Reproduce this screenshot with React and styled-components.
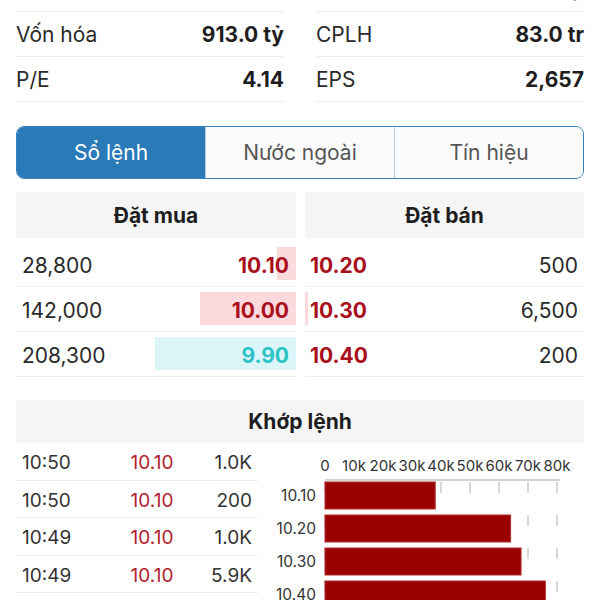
import React from 'react';
import styled, { createGlobalStyle } from 'styled-components';

const GlobalStyle = createGlobalStyle`
  html, body {
    margin: 0;
    padding: 0;
    background: #ffffff;
    overflow: hidden;
  }
  body {
    font-family: Inter, "Noto Sans", "Liberation Sans", sans-serif;
    color: #222;
  }
`;

// first row is scrolled almost out of view, only descenders peek through
const stats = [
  { left: ['Giá trị', '1,234.5'], right: ['GTGD', '2.0 tỷ'], clipped: true },
  { left: ['Vốn hóa', '913.0 tỷ'], right: ['CPLH', '83.0 tr'] },
  { left: ['P/E', '4.14'], right: ['EPS', '2,657'] },
];

const buys = [
  { qty: '28,800', price: '10.10', color: '#a8101b', bar: 19, bg: '#fbd9dc' },
  { qty: '142,000', price: '10.00', color: '#a8101b', bar: 96, bg: '#fbd9dc' },
  { qty: '208,300', price: '9.90', color: '#2cc3c6', bar: 141, bg: '#dcf5f8' },
];

const sells = [
  { qty: '500', price: '10.20', bar: 0 },
  { qty: '6,500', price: '10.30', bar: 3 },
  { qty: '200', price: '10.40', bar: 0 },
];

const trades = [
  ['10:50', '10.10', '1.0K'],
  ['10:50', '10.10', '200'],
  ['10:49', '10.10', '1.0K'],
  ['10:49', '10.10', '5.9K'],
];

const volumes = [
  { price: '10.10', value: 38 },
  { price: '10.20', value: 64 },
  { price: '10.30', value: 67.6 },
  { price: '10.40', value: 76 },
];

const Page = styled.div`
  padding: 0 16px;
  height: 600px;
  overflow: hidden;
`;

const StatsGrid = styled.div`
  display: grid;
  grid-template-columns: 1fr 1fr;
  column-gap: 32px;
  margin-top: -33px;
`;

const StatRow = styled.div`
  display: flex;
  justify-content: space-between;
  align-items: ${p => (p.$clipped ? 'flex-start' : 'center')};
  padding-top: ${p => (p.$clipped ? '9px' : '0')};
  box-sizing: border-box;
  height: 45px;
  border-bottom: 1px solid #ececec;
  font-size: 21px;
`;

const StatLabel = styled.span`
  color: #2a2a2a;
`;

const StatValue = styled.span`
  font-weight: 700;
  color: #1e1e1e;
`;

const Tabs = styled.div`
  display: flex;
  margin-top: 24px;
  height: 51px;
  border: 1.5px solid #3481be;
  border-radius: 8px;
  overflow: hidden;
`;

const Tab = styled.div`
  flex: 1;
  display: flex;
  align-items: center;
  justify-content: center;
  font-size: 21px;
  background: ${p => (p.$active ? '#2b7ab8' : '#fbfbfc')};
  color: ${p => (p.$active ? '#ffffff' : '#555')};
  & + & {
    border-left: 1px solid #bfcedb;
  }
`;

const Book = styled.div`
  display: grid;
  grid-template-columns: 280px 1fr;
  column-gap: 9px;
  margin-top: 13px;
`;

const SideHeader = styled.div`
  height: 46px;
  display: flex;
  align-items: center;
  justify-content: center;
  background: #f5f5f5;
  font-size: 21px;
  font-weight: 700;
  color: #1e1e1e;
  margin-bottom: 4px;
`;

const BookRow = styled.div`
  position: relative;
  display: flex;
  justify-content: space-between;
  align-items: center;
  box-sizing: border-box;
  height: 45px;
  padding-top: 2px;
  border-bottom: 1px solid #ededed;
  padding-left: ${p => (p.$sell ? '5px' : '6px')};
  padding-right: ${p => (p.$sell ? '6px' : '7px')};
  font-size: 21px;
`;

const DepthBar = styled.div`
  position: absolute;
  top: 5px;
  bottom: 6px;
  ${p => (p.$sell ? 'left: 0;' : 'right: 0;')}
  background: ${p => p.$bg};
`;

const Qty = styled.span`
  position: relative;
  color: #2a2a2a;
`;

const Price = styled.span`
  position: relative;
  font-weight: 700;
  color: ${p => p.$color};
`;

const MatchHeader = styled.div`
  margin-top: 23px;
  height: 43px;
  display: flex;
  align-items: center;
  justify-content: center;
  background: #f5f5f5;
  font-size: 21px;
  font-weight: 700;
  color: #1e1e1e;
`;

const MatchBody = styled.div`
  display: grid;
  grid-template-columns: 242px 1fr;
`;

const TradeRow = styled.div`
  display: grid;
  grid-template-columns: 86px 88px 1fr;
  align-items: center;
  box-sizing: border-box;
  height: 37.5px;
  padding: 3px 6px 0;
  border-bottom: 1px solid #ededed;
  font-size: 19px;
  color: #333;
`;

const TradePrice = styled.span`
  color: #b2222e;
  text-align: center;
`;

const TradeVol = styled.span`
  text-align: right;
`;

const Chart = styled.svg`
  display: block;
  font-family: Inter, "Liberation Sans", sans-serif;
`;

function VolumeChart() {
  const x0 = 67;
  const step = 29;
  const ticks = [0, 10, 20, 30, 40, 50, 60, 70, 80];
  return (
    <Chart width="342" height="158">
      {ticks.map((t, i) => (
        <g key={t}>
          <text x={x0 + i * step} y="28" fontSize="15" fill="#333" textAnchor="middle">
            {t === 0 ? '0' : `${t}k`}
          </text>
          <line
            x1={x0 + i * step}
            x2={x0 + i * step}
            y1="37"
            y2="158"
            stroke="#c2c2c2"
            strokeWidth="1.3"
            strokeDasharray="11 22"
            strokeDashoffset="-2"
          />
        </g>
      ))}
      <line x1={x0} x2={x0 + 8 * step + 3} y1="37" y2="37" stroke="#c4c4c4" strokeWidth="1.3" />
      {volumes.map((v, i) => (
        <g key={v.price}>
          <rect
            x={x0}
            y={39 + i * 33}
            width={(v.value / 10) * step}
            height="27"
            fill="#9b0000"
            stroke="#b32a2a"
            strokeWidth="1"
          />
          <text x="58" y={58 + i * 33} fontSize="15.5" fill="#333" textAnchor="end">
            {v.price}
          </text>
        </g>
      ))}
    </Chart>
  );
}

export default function App() {
  return (
    <Page>
      <GlobalStyle />
      <StatsGrid>
        {stats.map(row => (
          <React.Fragment key={row.left[0]}>
            <StatRow $clipped={row.clipped}>
              <StatLabel>{row.left[0]}</StatLabel>
              <StatValue>{row.left[1]}</StatValue>
            </StatRow>
            <StatRow $clipped={row.clipped}>
              <StatLabel>{row.right[0]}</StatLabel>
              <StatValue>{row.right[1]}</StatValue>
            </StatRow>
          </React.Fragment>
        ))}
      </StatsGrid>

      <Tabs>
        <Tab $active>Sổ lệnh</Tab>
        <Tab>Nước ngoài</Tab>
        <Tab>Tín hiệu</Tab>
      </Tabs>

      <Book>
        <div>
          <SideHeader>Đặt mua</SideHeader>
          {buys.map(b => (
            <BookRow key={b.price}>
              <DepthBar $bg={b.bg} style={{ width: b.bar }} />
              <Qty>{b.qty}</Qty>
              <Price $color={b.color}>{b.price}</Price>
            </BookRow>
          ))}
        </div>
        <div>
          <SideHeader>Đặt bán</SideHeader>
          {sells.map(s => (
            <BookRow key={s.price} $sell>
              {s.bar > 0 && <DepthBar $sell $bg="#fbd9dc" style={{ width: s.bar }} />}
              <Price $color="#a8101b">{s.price}</Price>
              <Qty>{s.qty}</Qty>
            </BookRow>
          ))}
        </div>
      </Book>

      <MatchHeader>Khớp lệnh</MatchHeader>
      <MatchBody>
        <div>
          {trades.map((t, i) => (
            <TradeRow key={i}>
              <span>{t[0]}</span>
              <TradePrice>{t[1]}</TradePrice>
              <TradeVol>{t[2]}</TradeVol>
            </TradeRow>
          ))}
        </div>
        <VolumeChart />
      </MatchBody>
    </Page>
  );
}
